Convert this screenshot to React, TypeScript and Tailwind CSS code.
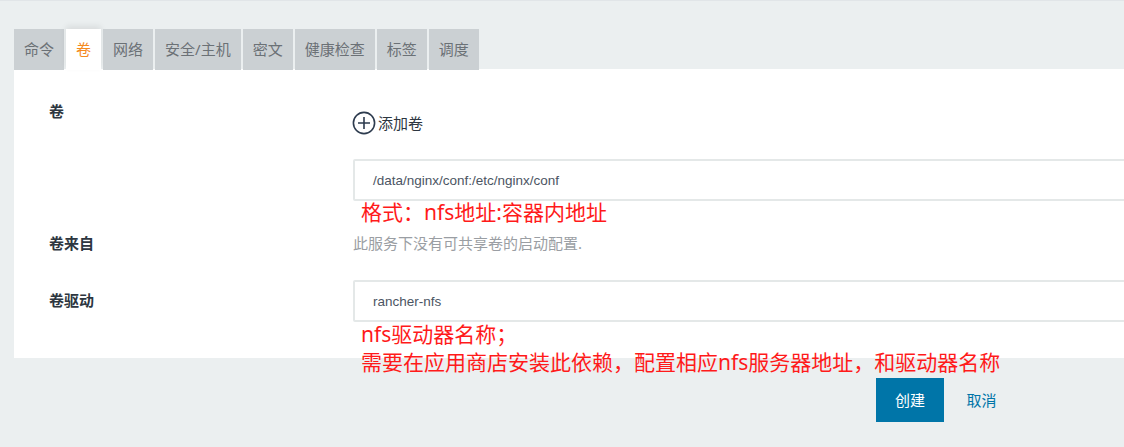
const sans = "font-['Noto_Sans','Noto_Sans_CJK_SC',sans-serif]";

const tabs = ["命令", "卷", "网络", "安全/主机", "密文", "健康检查", "标签", "调度"];

function Field({ value }: { value: string }) {
  return (
    <div className="h-[42px] -mr-1 flex items-center pl-[18px] pt-[3px] bg-white border-2 border-[#e4e8e8] rounded-[2px] font-['Liberation_Sans',sans-serif] text-[13.5px] text-[#4b5563]">
      {value}
    </div>
  );
}

export default function App() {
  return (
    <div className={`${sans} relative w-[1124px] h-[447px] overflow-hidden bg-[#ebeff0] border-t border-[#e1e5e8] pt-7 pl-3.5`}>
      {/* Tabs */}
      <div className="flex gap-0.5 h-[41px] relative z-10">
        {tabs.map((tab, i) => (
          <div
            key={tab}
            className={`px-2.5 flex items-center text-[15px] ${
              i === 1
                ? "bg-white text-[#f58a1f] shadow-[0_-3px_6px_rgba(0,0,0,0.08)]"
                : "bg-[#cbd0d3] text-[#6b7176]"
            }`}
          >
            {tab}
          </div>
        ))}
      </div>

      {/* Panel */}
      <div className="relative bg-white h-[289px] -mt-px pt-[33px] pl-[35px] text-[#2d3640]">
        <div className="grid grid-cols-[304px_1fr]">
          <div className="text-[15px] font-bold leading-5 -mt-px">卷</div>
          <div>
            <div className="flex items-center h-6 mt-[9px] text-[15px]">
              <svg width="24" height="24" viewBox="0 0 24 24" fill="none" stroke="#2d3b4e" strokeWidth="1.6" className="-ml-px">
                <circle cx="12" cy="12" r="10.6" />
                <path d="M12 6v12M6 12h12" />
              </svg>
              <span className="ml-0.5">添加卷</span>
            </div>
            <div className="mt-6">
              <Field value="/data/nginx/conf:/etc/nginx/conf" />
            </div>
          </div>
        </div>

        <div className="grid grid-cols-[304px_1fr] mt-8">
          <div className="text-[15px] font-bold leading-5">卷来自</div>
          <div className="text-[15px] leading-5 text-[#9a9ea3]">此服务下没有可共享卷的启动配置.</div>
        </div>

        <div className="grid grid-cols-[304px_1fr] mt-[27px]">
          <div className="text-[15px] font-bold leading-5 pt-2.5">卷驱动</div>
          <Field value="rancher-nfs" />
        </div>

        {/* Annotations */}
        <div className="absolute left-[347px] top-[129px] text-[21px] leading-7 text-[#ff1a1a] whitespace-nowrap">
          格式：nfs地址:容器内地址
        </div>
        <div className="absolute left-[347px] top-[251px] z-10 text-[21px] leading-[28px] text-[#ff1a1a] whitespace-nowrap">
          nfs驱动器名称；
          <br />
          需要在应用商店安装此依赖，配置相应nfs服务器地址，和驱动器名称
        </div>
      </div>

      {/* Actions */}
      <div className="flex mt-5 ml-[862px] items-center text-[15px]">
        <div className="w-[68px] h-11 flex items-center justify-center bg-[#0075a8] text-white">创建</div>
        <div className="w-[75px] h-11 flex items-center justify-center text-[#0075a8]">取消</div>
      </div>
    </div>
  );
}
